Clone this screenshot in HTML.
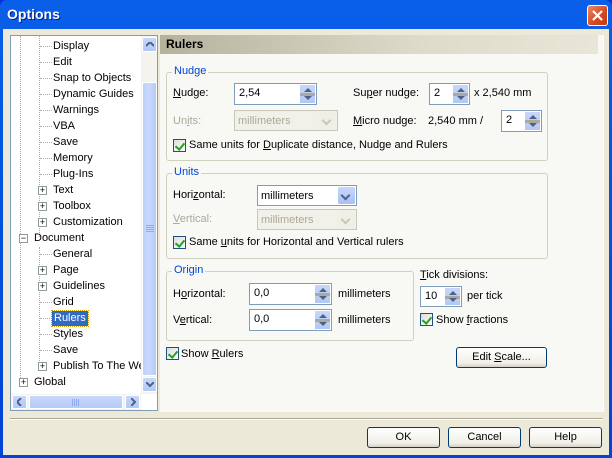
<!DOCTYPE html>
<html><head><style>
*{box-sizing:border-box;margin:0;padding:0}
body{width:612px;height:458px;overflow:hidden;font-family:"Liberation Sans",sans-serif;font-size:11px;color:#000;background:#0831d9}
.a{position:absolute}
#win{position:absolute;left:0;top:0;width:612px;height:458px;background:linear-gradient(#0a5fe9,#0453e0 40%,#0343d6);border-radius:7px 7px 0 0}
#title{position:absolute;left:7px;top:6px;color:#fff;font-weight:bold;font-size:14px;text-shadow:1px 1px #0a1e8c}
#close{position:absolute;left:587px;top:5px;width:21px;height:21px;border:1px solid #fff;border-radius:3px;background:linear-gradient(135deg,#e98a6a,#d4481e 60%,#c23b14)}
#body{position:absolute;left:3px;top:29px;width:606px;height:426px;background:#ece9d8}
.grp{position:absolute;border:1px solid #d0d0bf;border-radius:3px}
.lg{position:absolute;color:#0046d5;background:#f8f8f5;padding:0 2px;top:-8px;left:5px}
.in{position:absolute;background:#fff;border:1px solid #7f9db9}
.dis{background:#f2f1e9;border-color:#c9c7ba;color:#aca899}
.spin{position:absolute;right:1px;top:1px;bottom:1px;width:16px;background:linear-gradient(#c7d7fb,#b3c8f5);border-left:1px solid #fff}
.spin:before{content:"";position:absolute;left:0;right:0;top:50%;margin-top:-1px;height:3px;background:#aaa9a0}
.spin i{position:absolute;left:4px;width:0;height:0;border-left:4px solid transparent;border-right:4px solid transparent}
.spin .u{top:3px;border-bottom:4px solid #4d6185}
.spin .d{bottom:3px;border-top:4px solid #4d6185}
.dd{position:absolute;right:1px;top:1px;bottom:1px;width:17px;background:linear-gradient(#c7d7fb,#a9c0f5);border-radius:2px}
.dd:after{content:"";position:absolute;left:4px;top:5px;width:5px;height:5px;border-right:2px solid #4d6185;border-bottom:2px solid #4d6185;transform:rotate(45deg)}
.dis .dd{background:#f0efe6}.dis .dd:after{border-color:#c9c7ba}
.t{position:absolute;white-space:nowrap}
.g{color:#aca899}
.cb{position:absolute;width:13px;height:13px;border:1px solid #1c5180;background:linear-gradient(135deg,#dcdcd7,#fff)}
.cb:after{content:"";position:absolute;left:3px;top:1px;width:4px;height:7px;border-right:2px solid #21a121;border-bottom:2px solid #21a121;transform:rotate(40deg)}
.btn{position:absolute;height:21px;border:1px solid #003c74;border-radius:3px;background:linear-gradient(#fff,#f0efe8 80%,#d6d0c5);text-align:center;line-height:19px}
.tr{position:absolute;left:0;white-space:nowrap;height:16px;line-height:16px}
.pl{position:absolute;width:9px;height:9px;border:1px solid #919b9c;background:#fff;font-size:9px;line-height:7px;text-align:center;color:#000}
u{text-decoration:underline}
</style></head><body>
<div id="win">
<div id="title">Options</div>
<div id="close"><svg width="19" height="19" viewBox="0 0 19 19"><path d="M5 5L14 14M14 5L5 14" stroke="#fff" stroke-width="2.2"/></svg></div>
<div id="body"></div>

<div class="a" style="left:10px;top:35px;width:148px;height:376px;border:1px solid #7f9db9;background:#fff;overflow:hidden">
 <div class="a" style="left:9px;top:0;height:348px;border-left:1px dotted #aaa"></div>
 <div class="a" style="left:28px;top:0;height:201px;border-left:1px dotted #aaa"></div>
 <div class="a" style="left:28px;top:211px;height:118px;border-left:1px dotted #aaa"></div>
 <div style="position:absolute;left:0;top:2px;width:130px">
 <div class="tr" style="top:0"><span class="a" style="left:29px;top:8px;width:12px;border-top:1px dotted #aaa"></span><span class="a" style="left:42px">Display</span></div>
 <div class="tr" style="top:16px"><span class="a" style="left:29px;top:8px;width:12px;border-top:1px dotted #aaa"></span><span class="a" style="left:42px">Edit</span></div>
 <div class="tr" style="top:32px"><span class="a" style="left:29px;top:8px;width:12px;border-top:1px dotted #aaa"></span><span class="a" style="left:42px">Snap to Objects</span></div>
 <div class="tr" style="top:48px"><span class="a" style="left:29px;top:8px;width:12px;border-top:1px dotted #aaa"></span><span class="a" style="left:42px">Dynamic Guides</span></div>
 <div class="tr" style="top:64px"><span class="a" style="left:29px;top:8px;width:12px;border-top:1px dotted #aaa"></span><span class="a" style="left:42px">Warnings</span></div>
 <div class="tr" style="top:80px"><span class="a" style="left:29px;top:8px;width:12px;border-top:1px dotted #aaa"></span><span class="a" style="left:42px">VBA</span></div>
 <div class="tr" style="top:96px"><span class="a" style="left:29px;top:8px;width:12px;border-top:1px dotted #aaa"></span><span class="a" style="left:42px">Save</span></div>
 <div class="tr" style="top:112px"><span class="a" style="left:29px;top:8px;width:12px;border-top:1px dotted #aaa"></span><span class="a" style="left:42px">Memory</span></div>
 <div class="tr" style="top:128px"><span class="a" style="left:29px;top:8px;width:12px;border-top:1px dotted #aaa"></span><span class="a" style="left:42px">Plug-Ins</span></div>
 <div class="tr" style="top:144px"><span class="pl" style="left:27px;top:4px">+</span><span class="a" style="left:42px">Text</span></div>
 <div class="tr" style="top:160px"><span class="pl" style="left:27px;top:4px">+</span><span class="a" style="left:42px">Toolbox</span></div>
 <div class="tr" style="top:176px"><span class="pl" style="left:27px;top:4px">+</span><span class="a" style="left:42px">Customization</span></div>
 <div class="tr" style="top:192px"><span class="pl" style="left:8px;top:4px">−</span><span class="a" style="left:23px">Document</span></div>
 <div class="tr" style="top:208px"><span class="a" style="left:29px;top:8px;width:12px;border-top:1px dotted #aaa"></span><span class="a" style="left:42px">General</span></div>
 <div class="tr" style="top:224px"><span class="pl" style="left:27px;top:4px">+</span><span class="a" style="left:42px">Page</span></div>
 <div class="tr" style="top:240px"><span class="pl" style="left:27px;top:4px">+</span><span class="a" style="left:42px">Guidelines</span></div>
 <div class="tr" style="top:256px"><span class="a" style="left:29px;top:8px;width:12px;border-top:1px dotted #aaa"></span><span class="a" style="left:42px">Grid</span></div>
 <div class="tr" style="top:272px"><span class="a" style="left:29px;top:8px;width:12px;border-top:1px dotted #aaa"></span><span class="a" style="left:41px;top:1px;height:15px;line-height:14px;padding:0 2px;background:#316ac5;color:#fff;outline:1px dotted #d0a000">Rulers</span></div>
 <div class="tr" style="top:288px"><span class="a" style="left:29px;top:8px;width:12px;border-top:1px dotted #aaa"></span><span class="a" style="left:42px">Styles</span></div>
 <div class="tr" style="top:304px"><span class="a" style="left:29px;top:8px;width:12px;border-top:1px dotted #aaa"></span><span class="a" style="left:42px">Save</span></div>
 <div class="tr" style="top:320px"><span class="pl" style="left:27px;top:4px">+</span><span class="a" style="left:42px">Publish To The Web</span></div>
 <div class="tr" style="top:336px"><span class="pl" style="left:8px;top:4px">+</span><span class="a" style="left:23px">Global</span></div>
 </div>
 <div class="a" style="left:130px;top:0;width:17px;height:358px;background:#f4f3ee">
  <div class="a" style="left:1px;top:1px;width:15px;height:15px;border-radius:2px;background:linear-gradient(#c7d7fb,#b3c8f5);border:1px solid #fff"><svg class="a" style="left:3px;top:4px" width="8" height="5"><path d="M0 4L4 0L8 4" stroke="#4d6185" stroke-width="2" fill="none"/></svg></div>
  <div class="a" style="left:1px;top:46px;width:15px;height:294px;border-radius:2px;background:linear-gradient(90deg,#bcd0fa,#c9d9fc 50%,#b5c9f5);border:1px solid #fff"><svg class="a" style="left:3px;top:142px" width="8" height="8"><path d="M0 .5H8M0 2.5H8M0 4.5H8M0 6.5H8" stroke="#8faaf0"/></svg></div>
  <div class="a" style="left:1px;top:341px;width:15px;height:15px;border-radius:2px;background:linear-gradient(#c7d7fb,#b3c8f5);border:1px solid #fff"><svg class="a" style="left:3px;top:4px" width="8" height="5"><path d="M0 0L4 4L8 0" stroke="#4d6185" stroke-width="2" fill="none"/></svg></div>
 </div>
 <div class="a" style="left:0;top:358px;width:130px;height:16px;background:#f4f3ee">
  <div class="a" style="left:1px;top:1px;width:15px;height:14px;border-radius:2px;background:linear-gradient(#c7d7fb,#b3c8f5);border:1px solid #fff"><svg class="a" style="left:4px;top:2px" width="5" height="8"><path d="M4 0L0 4L4 8" stroke="#4d6185" stroke-width="2" fill="none"/></svg></div>
  <div class="a" style="left:18px;top:1px;width:94px;height:14px;border-radius:2px;background:linear-gradient(#c9d9fc,#b5c9f5);border:1px solid #fff"><svg class="a" style="left:42px;top:3px" width="8" height="7"><path d="M.5 0V7M2.5 0V7M4.5 0V7M6.5 0V7" stroke="#8faaf0"/></svg></div>
  <div class="a" style="left:114px;top:1px;width:15px;height:14px;border-radius:2px;background:linear-gradient(#c7d7fb,#b3c8f5);border:1px solid #fff"><svg class="a" style="left:5px;top:2px" width="5" height="8"><path d="M0 0L4 4L0 8" stroke="#4d6185" stroke-width="2" fill="none"/></svg></div>
 </div>
</div>

<div class="a" style="left:160px;top:35px;width:444px;height:377px;background:#f8f8f5;border-right:1px solid #fff"></div>
<div class="a" style="left:160px;top:35px;width:438px;height:19px;background:linear-gradient(90deg,#b5b29c,#dedbcb 60%,#e8e6d8);font-weight:bold;font-size:12px;line-height:19px;padding-left:6px">Rulers</div>

<div class="grp" style="left:166px;top:72px;width:382px;height:89px"><span class="lg">Nudge</span></div>
<span class="t" style="left:173px;top:87px"><u>N</u>udge:</span>
<div class="in" style="left:234px;top:83px;width:83px;height:22px"><span class="t" style="left:4px;top:3px">2,54</span><div class="spin"><i class="u"></i><i class="d"></i></div></div>
<span class="t" style="left:353px;top:87px">Su<u>p</u>er nudge:</span>
<div class="in" style="left:429px;top:83px;width:41px;height:22px"><span class="t" style="left:4px;top:3px">2</span><div class="spin"><i class="u"></i><i class="d"></i></div></div>
<span class="t" style="left:474px;top:87px">x 2,540 mm</span>
<span class="t g" style="left:173px;top:115px">Un<u>i</u>ts:</span>
<div class="in dis" style="left:234px;top:110px;width:104px;height:21px"><span class="t" style="left:3px;top:4px">millimeters</span><div class="dd"></div></div>
<span class="t" style="left:353px;top:115px"><u>M</u>icro nudge:</span>
<span class="t" style="left:428px;top:115px">2,540 mm /</span>
<div class="in" style="left:501px;top:110px;width:41px;height:22px"><span class="t" style="left:4px;top:3px">2</span><div class="spin"><i class="u"></i><i class="d"></i></div></div>
<div class="cb" style="left:173px;top:139px"></div>
<span class="t" style="left:189px;top:139px">Same units for <u>D</u>uplicate distance, Nudge and Rulers</span>

<div class="grp" style="left:166px;top:173px;width:382px;height:86px"><span class="lg">Units</span></div>
<span class="t" style="left:173px;top:189px">Hori<u>z</u>ontal:</span>
<div class="in" style="left:257px;top:185px;width:100px;height:21px"><span class="t" style="left:3px;top:4px">millimeters</span><div class="dd"></div></div>
<span class="t g" style="left:173px;top:213px"><u>V</u>ertical:</span>
<div class="in dis" style="left:257px;top:209px;width:100px;height:21px"><span class="t" style="left:3px;top:4px">millimeters</span><div class="dd"></div></div>
<div class="cb" style="left:173px;top:236px"></div>
<span class="t" style="left:189px;top:236px">Same <u>u</u>nits for Horizontal and Vertical rulers</span>

<div class="grp" style="left:166px;top:271px;width:248px;height:70px"><span class="lg">Origin</span></div>
<span class="t" style="left:173px;top:288px">H<u>o</u>rizontal:</span>
<div class="in" style="left:249px;top:283px;width:83px;height:22px"><span class="t" style="left:4px;top:3px">0,0</span><div class="spin"><i class="u"></i><i class="d"></i></div></div>
<span class="t" style="left:338px;top:288px">millimeters</span>
<span class="t" style="left:173px;top:314px">V<u>e</u>rtical:</span>
<div class="in" style="left:249px;top:309px;width:83px;height:22px"><span class="t" style="left:4px;top:3px">0,0</span><div class="spin"><i class="u"></i><i class="d"></i></div></div>
<span class="t" style="left:338px;top:314px">millimeters</span>

<span class="t" style="left:420px;top:269px"><u>T</u>ick divisions:</span>
<div class="in" style="left:420px;top:286px;width:42px;height:21px"><span class="t" style="left:4px;top:3px">10</span><div class="spin"><i class="u"></i><i class="d"></i></div></div>
<span class="t" style="left:467px;top:290px">per tick</span>
<div class="cb" style="left:420px;top:313px"></div>
<span class="t" style="left:436px;top:314px">Show <u>f</u>ractions</span>
<div class="btn" style="left:456px;top:347px;width:91px">Edit <u>S</u>cale...</div>
<div class="cb" style="left:166px;top:347px"></div>
<span class="t" style="left:181px;top:348px">Show <u>R</u>ulers</span>

<div class="a" style="left:10px;top:418px;width:593px;border-top:1px solid #aca899;border-bottom:1px solid #fff"></div>
<div class="btn" style="left:367px;top:427px;width:73px">OK</div>
<div class="btn" style="left:448px;top:427px;width:73px">Cancel</div>
<div class="btn" style="left:529px;top:427px;width:73px">Help</div>
</div>
</body></html>
